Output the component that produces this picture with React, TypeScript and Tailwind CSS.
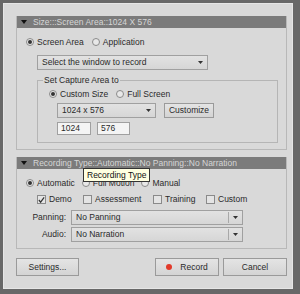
import React from 'react'

const font = { fontFamily: '"Liberation Sans", Arial, sans-serif' }

function Radio({ checked, label }: { checked?: boolean; label: string }) {
  return (
    <div className="flex items-center gap-[3px]">
      <span className="w-[8px] h-[8px] rounded-full border border-[#8a8a8a] bg-[#e8e8e8] flex items-center justify-center">
        {checked && <span className="w-[4px] h-[4px] rounded-full bg-[#333]" />}
      </span>
      <span>{label}</span>
    </div>
  )
}

function Check({ checked, label }: { checked?: boolean; label: string }) {
  return (
    <div className="flex items-center gap-[3px]">
      <span className="w-[9px] h-[9px] border border-[#8a8a8a] bg-[#e4e4e4] flex items-center justify-center">
        {checked && (
          <svg width="8" height="8" viewBox="0 0 8 8">
            <path d="M1 4 L3 6.5 L7 1" stroke="#333" strokeWidth="1.4" fill="none" />
          </svg>
        )}
      </span>
      <span>{label}</span>
    </div>
  )
}

function Arrow() {
  return (
    <svg width="5" height="3" viewBox="0 0 5 3">
      <path d="M0 0 H5 L2.5 3 Z" fill="#333" />
    </svg>
  )
}

function Header({ text }: { text: string }) {
  return (
    <div className="h-[12px] bg-[#7b7b7b] flex items-center pl-[4px] gap-[6px] text-[#d6d6d6]">
      <svg width="6" height="4" viewBox="0 0 6 4">
        <path d="M0 0 H6 L3 4 Z" fill="#111" />
      </svg>
      <span>{text}</span>
    </div>
  )
}

function Select({ text, w, sep }: { text: string; w: string; sep?: boolean }) {
  return (
    <div className={`${w} h-[15px] border border-[#a0a0a0] bg-gradient-to-b from-[#e2e2e2] to-[#d6d6d6] flex items-center pl-[4px] pr-[4px]`}>
      <span className="flex-1">{text}</span>
      {sep && <span className="w-px h-[11px] bg-[#a8a8a8] mr-[4px]" />}
      <Arrow />
    </div>
  )
}

const btn = 'border border-[#9a9a9a] bg-gradient-to-b from-[#e4e4e4] to-[#d4d4d4] flex items-center justify-center'

export default function App() {
  return (
    <div className="w-[300px] h-[294px] bg-[#686868] pt-[3px] pl-[3px] pr-[7px] pb-[5px] text-[8.5px] text-[#2a2a2a]" style={font}>
      <div className="h-full bg-[#d9d9d9] border border-[#e6e6e6] pt-[12px] pl-[12px] pr-[5px]">
        {/* Size section */}
        <div className="border border-[#b8b8b8] border-t-0 h-[134px]">
          <Header text="Size:::Screen Area::1024 X 576" />
          <div className="pl-[9px] mt-[8px] flex gap-[8px] h-[12px] items-center">
            <Radio checked label="Screen Area" />
            <Radio label="Application" />
          </div>
          <div className="ml-[20px] mt-[7px]">
            <Select text="Select the window to record" w="w-[171px]" />
          </div>
          <div className="ml-[20px] mr-[8px] mt-[10px] border border-[#b5b5b5] h-[63px] relative">
            <span className="absolute left-[5px] top-[-7px] bg-[#d9d9d9] px-[1px]">Set Capture Area to</span>
            <div className="pl-[11px] pt-[7px] flex gap-[8px] h-[19px] items-center">
              <Radio checked label="Custom Size" />
              <Radio label="Full Screen" />
            </div>
            <div className="ml-[19px] mt-[3px] flex gap-[8px]">
              <Select text="1024 x 576" w="w-[99px]" />
              <div className={`w-[50px] h-[15px] ${btn}`}>Customize</div>
            </div>
            <div className="ml-[19px] mt-[4px] flex gap-[6px]">
              <div className="w-[34px] h-[13px] border border-[#a0a0a0] bg-[#f4f4f4] pl-[3px] flex items-center">1024</div>
              <div className="w-[33px] h-[13px] border border-[#a0a0a0] bg-[#f4f4f4] pl-[3px] flex items-center">576</div>
            </div>
          </div>
        </div>

        {/* Recording type section */}
        <div className="mt-[7px] border border-[#b8b8b8] border-t-0 h-[92px] relative">
          <Header text="Recording Type::Automatic::No Panning::No Narration" />
          <div className="absolute left-[66px] top-[11px] h-[14px] px-[3px] bg-[#ffffe1] border border-[#333] flex items-center text-[#111] z-10">
            Recording Type
          </div>
          <div className="pl-[9px] mt-[9px] flex gap-[7px] h-[10px] items-center">
            <Radio checked label="Automatic" />
            <Radio label="Full Motion" />
            <Radio label="Manual" />
          </div>
          <div className="pl-[20px] mt-[6px] flex h-[11px] items-center">
            <div className="w-[46px]"><Check checked label="Demo" /></div>
            <div className="w-[70px]"><Check label="Assessment" /></div>
            <div className="w-[53px]"><Check label="Training" /></div>
            <Check label="Custom" />
          </div>
          <div className="mt-[5px] flex items-center gap-[5px]">
            <span className="w-[49px] text-right">Panning:</span>
            <Select text="No Panning" w="w-[172px]" sep />
          </div>
          <div className="mt-[2px] flex items-center gap-[5px]">
            <span className="w-[49px] text-right">Audio:</span>
            <Select text="No Narration" w="w-[172px]" sep />
          </div>
        </div>

        {/* Buttons */}
        <div className="mt-[9px] flex h-[18px]">
          <div className={`w-[63px] ${btn}`}>Settings...</div>
          <div className="flex-1" />
          <div className={`w-[64px] gap-[8px] ${btn}`}>
            <span className="w-[6px] h-[6px] rounded-full bg-[#e23a2a]" />
            <span>Record</span>
          </div>
          <div className={`w-[64px] ml-[4px] ${btn}`}>Cancel</div>
        </div>
      </div>
    </div>
  )
}
